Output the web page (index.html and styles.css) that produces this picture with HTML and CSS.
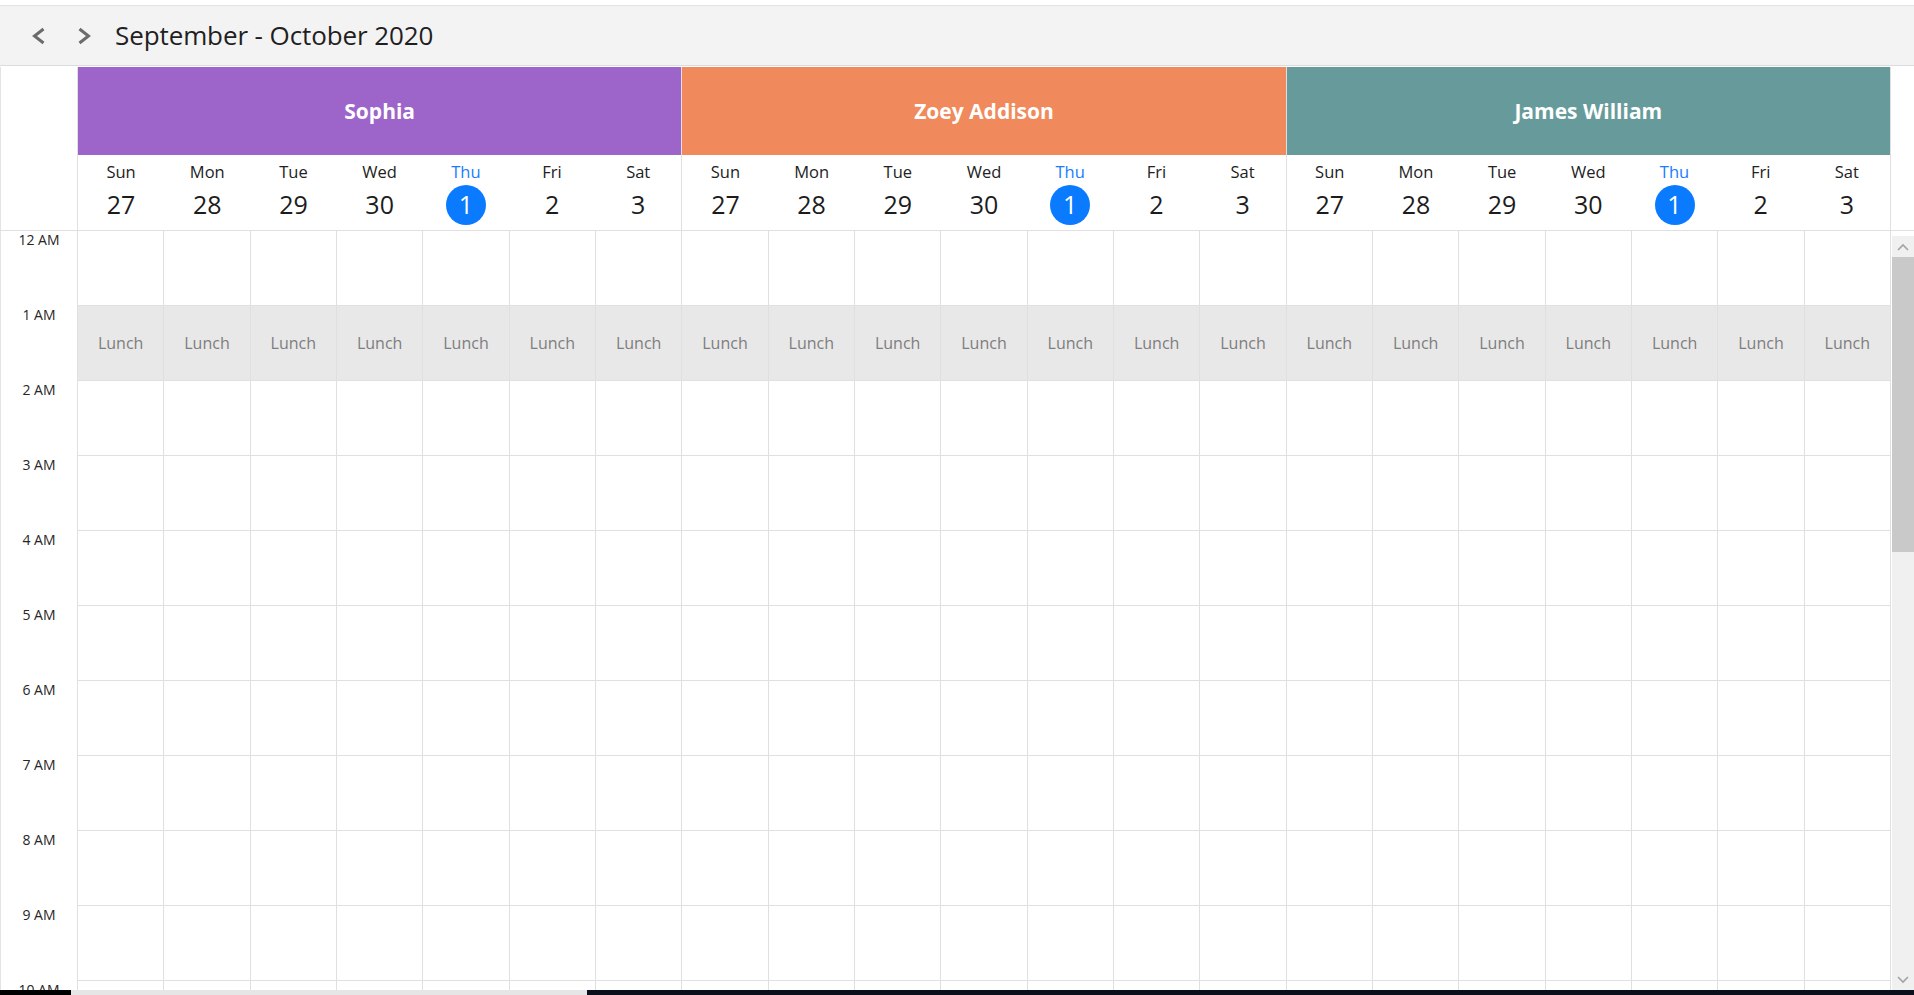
FILE: index.html
```html
<!DOCTYPE html>
<html lang="en">
<head>
<meta charset="utf-8">
<title>Scheduler</title>
<link rel="stylesheet" href="styles.css">
</head>
<body>
<div class="page">
  <header class="toolbar">
    <button class="nav-btn" aria-label="Previous">
      <svg width="14" height="18" viewBox="0 0 14 18"><polyline points="11.5,2 2.5,9 11.5,16" /></svg>
    </button>
    <button class="nav-btn" aria-label="Next">
      <svg width="14" height="18" viewBox="0 0 14 18"><polyline points="2.5,2 11.5,9 2.5,16" /></svg>
    </button>
    <h1 class="title">September - October 2020</h1>
  </header>

  <section class="scheduler">
    <div class="head-row">
      <div class="corner"></div>
      <div class="resources">
        <div class="resource">
          <div class="res-name purple">Sophia</div>
          <div class="days">
            <div class="day"><span class="dname">Sun</span><span class="dnum">27</span></div>
            <div class="day"><span class="dname">Mon</span><span class="dnum">28</span></div>
            <div class="day"><span class="dname">Tue</span><span class="dnum">29</span></div>
            <div class="day"><span class="dname">Wed</span><span class="dnum">30</span></div>
            <div class="day today"><span class="dname">Thu</span><span class="dnum">1</span></div>
            <div class="day"><span class="dname">Fri</span><span class="dnum">2</span></div>
            <div class="day"><span class="dname">Sat</span><span class="dnum">3</span></div>
          </div>
        </div>
        <div class="resource">
          <div class="res-name orange">Zoey Addison</div>
          <div class="days">
            <div class="day"><span class="dname">Sun</span><span class="dnum">27</span></div>
            <div class="day"><span class="dname">Mon</span><span class="dnum">28</span></div>
            <div class="day"><span class="dname">Tue</span><span class="dnum">29</span></div>
            <div class="day"><span class="dname">Wed</span><span class="dnum">30</span></div>
            <div class="day today"><span class="dname">Thu</span><span class="dnum">1</span></div>
            <div class="day"><span class="dname">Fri</span><span class="dnum">2</span></div>
            <div class="day"><span class="dname">Sat</span><span class="dnum">3</span></div>
          </div>
        </div>
        <div class="resource">
          <div class="res-name teal">James William</div>
          <div class="days">
            <div class="day"><span class="dname">Sun</span><span class="dnum">27</span></div>
            <div class="day"><span class="dname">Mon</span><span class="dnum">28</span></div>
            <div class="day"><span class="dname">Tue</span><span class="dnum">29</span></div>
            <div class="day"><span class="dname">Wed</span><span class="dnum">30</span></div>
            <div class="day today"><span class="dname">Thu</span><span class="dnum">1</span></div>
            <div class="day"><span class="dname">Fri</span><span class="dnum">2</span></div>
            <div class="day"><span class="dname">Sat</span><span class="dnum">3</span></div>
          </div>
        </div>
      </div>
      <div class="head-spacer"></div>
    </div>

    <div class="body-row">
      <div class="times">
        <div class="time">12 AM</div>
        <div class="time">1 AM</div>
        <div class="time">2 AM</div>
        <div class="time">3 AM</div>
        <div class="time">4 AM</div>
        <div class="time">5 AM</div>
        <div class="time">6 AM</div>
        <div class="time">7 AM</div>
        <div class="time">8 AM</div>
        <div class="time">9 AM</div>
        <div class="time">10 AM</div>
      </div>
      <div class="grid">
        <div class="row"><i></i><i></i><i></i><i></i><i></i><i></i><i></i><i></i><i></i><i></i><i></i><i></i><i></i><i></i><i></i><i></i><i></i><i></i><i></i><i></i><i></i></div>
        <div class="row lunch"><i>Lunch</i><i>Lunch</i><i>Lunch</i><i>Lunch</i><i>Lunch</i><i>Lunch</i><i>Lunch</i><i>Lunch</i><i>Lunch</i><i>Lunch</i><i>Lunch</i><i>Lunch</i><i>Lunch</i><i>Lunch</i><i>Lunch</i><i>Lunch</i><i>Lunch</i><i>Lunch</i><i>Lunch</i><i>Lunch</i><i>Lunch</i></div>
        <div class="row"><i></i><i></i><i></i><i></i><i></i><i></i><i></i><i></i><i></i><i></i><i></i><i></i><i></i><i></i><i></i><i></i><i></i><i></i><i></i><i></i><i></i></div>
        <div class="row"><i></i><i></i><i></i><i></i><i></i><i></i><i></i><i></i><i></i><i></i><i></i><i></i><i></i><i></i><i></i><i></i><i></i><i></i><i></i><i></i><i></i></div>
        <div class="row"><i></i><i></i><i></i><i></i><i></i><i></i><i></i><i></i><i></i><i></i><i></i><i></i><i></i><i></i><i></i><i></i><i></i><i></i><i></i><i></i><i></i></div>
        <div class="row"><i></i><i></i><i></i><i></i><i></i><i></i><i></i><i></i><i></i><i></i><i></i><i></i><i></i><i></i><i></i><i></i><i></i><i></i><i></i><i></i><i></i></div>
        <div class="row"><i></i><i></i><i></i><i></i><i></i><i></i><i></i><i></i><i></i><i></i><i></i><i></i><i></i><i></i><i></i><i></i><i></i><i></i><i></i><i></i><i></i></div>
        <div class="row"><i></i><i></i><i></i><i></i><i></i><i></i><i></i><i></i><i></i><i></i><i></i><i></i><i></i><i></i><i></i><i></i><i></i><i></i><i></i><i></i><i></i></div>
        <div class="row"><i></i><i></i><i></i><i></i><i></i><i></i><i></i><i></i><i></i><i></i><i></i><i></i><i></i><i></i><i></i><i></i><i></i><i></i><i></i><i></i><i></i></div>
        <div class="row"><i></i><i></i><i></i><i></i><i></i><i></i><i></i><i></i><i></i><i></i><i></i><i></i><i></i><i></i><i></i><i></i><i></i><i></i><i></i><i></i><i></i></div>
        <div class="row"><i></i><i></i><i></i><i></i><i></i><i></i><i></i><i></i><i></i><i></i><i></i><i></i><i></i><i></i><i></i><i></i><i></i><i></i><i></i><i></i><i></i></div>
      </div>
      <div class="vscroll">
        <div class="sb-btn">
          <svg width="12" height="8" viewBox="0 0 12 8"><polyline points="1,7 6,2 11,7" /></svg>
        </div>
        <div class="sb-thumb"></div>
        <div class="sb-track"></div>
        <div class="sb-btn">
          <svg width="12" height="8" viewBox="0 0 12 8"><polyline points="1,1 6,6 11,1" /></svg>
        </div>
      </div>
    </div>
  </section>

  <div class="taskbar">
    <span class="tb-a"></span>
    <span class="tb-b"></span>
    <span class="tb-c"></span>
  </div>
</div>
</body>
</html>
```

FILE: styles.css
```css
* {
  box-sizing: border-box;
}

html,
body {
  margin: 0;
  padding: 0;
  width: 1914px;
  height: 995px;
  overflow: hidden;
  background: #ffffff;
  font-family: "Open Sans", "Noto Sans", "Liberation Sans", sans-serif;
  color: #1e1e1e;
}

.page {
  display: flex;
  flex-direction: column;
  height: 995px;
  padding-top: 5px;
}

/* ---------- toolbar ---------- */
.toolbar {
  height: 61px;
  flex: none;
  display: flex;
  align-items: center;
  background: #f3f3f3;
  border-top: 1px solid #e2e2e2;
  border-bottom: 1px solid #dcdcdc;
  padding-left: 31px;
}

.nav-btn {
  width: 16px;
  height: 20px;
  padding: 0;
  border: 0;
  background: transparent;
  display: flex;
  align-items: center;
  justify-content: center;
  margin-right: 29px;
}

.nav-btn + .nav-btn {
  margin-right: 23px;
}

.nav-btn svg polyline {
  fill: none;
  stroke: #6b6b6b;
  stroke-width: 3;
  stroke-linecap: butt;
  stroke-linejoin: miter;
}

.title {
  margin: 0 0 2px 0;
  font-size: 26px;
  font-weight: 400;
  color: #1f1f1f;
  letter-spacing: -0.1px;
}

/* ---------- scheduler ---------- */
.scheduler {
  flex: 1;
  display: flex;
  flex-direction: column;
  padding-top: 1px;
  min-height: 0;
}

.head-row {
  display: flex;
  flex: none;
  height: 164px;
  border-bottom: 1px solid #e0e0e0;
}

.corner {
  width: 78px;
  flex: none;
  border-left: 1px solid #e3e3e3;
  border-right: 1px solid #e0e0e0;
}

.resources {
  flex: 1;
  display: flex;
}

.resource {
  flex: 1;
  display: flex;
  flex-direction: column;
  border-right: 1px solid #e0e0e0;
}

.res-name {
  height: 88px;
  display: flex;
  align-items: center;
  justify-content: center;
  color: #ffffff;
  font-weight: 700;
  font-size: 21px;
}

.purple { background: #9d65c9; }
.orange { background: #f08a5d; }
.teal { background: #679b9b; }

.days {
  flex: 1;
  display: flex;
}

.day {
  flex: 1;
  display: flex;
  flex-direction: column;
  align-items: center;
  padding-top: 6px;
}

.dname {
  font-size: 16.5px;
  line-height: 22px;
  color: #222222;
}

.dnum {
  margin-top: 2px;
  width: 40px;
  height: 40px;
  line-height: 38px;
  text-align: center;
  font-size: 25px;
  color: #1c1c1c;
  border-radius: 50%;
}

.today .dname {
  color: #1a7dff;
}

.today .dnum {
  background: #0a7bff;
  color: #ffffff;
}

.head-spacer {
  width: 23px;
  flex: none;
}

/* ---------- body ---------- */
.body-row {
  flex: 1;
  display: flex;
  min-height: 0;
  overflow: hidden;
}

.times {
  width: 78px;
  flex: none;
  border-left: 1px solid #e3e3e3;
  border-right: 1px solid #e0e0e0;
}

.time {
  height: 75px;
  text-align: center;
  font-size: 14px;
  line-height: 18px;
  padding-top: 0;
  color: #262626;
}

.grid {
  flex: 1;
  display: flex;
  flex-direction: column;
}

.row {
  flex: none;
  height: 75px;
  display: grid;
  grid-template-columns: repeat(21, 1fr);
}

.row i {
  font-style: normal;
  border-right: 1px solid #e0e0e0;
  border-bottom: 1px solid #e0e0e0;
}

.lunch i {
  background: #e8e8e8;
  display: flex;
  align-items: center;
  justify-content: center;
  font-size: 16px;
  color: #7e7e7e;
}

/* vertical scrollbar */
.vscroll {
  width: 22px;
  margin-left: 1px;
  flex: none;
  margin-top: 5px;
  background: #f0f0f0;
  display: flex;
  flex-direction: column;
}

.sb-btn {
  height: 21px;
  flex: none;
  display: flex;
  align-items: center;
  justify-content: center;
}

.sb-btn svg polyline {
  fill: none;
  stroke: #a3a3a3;
  stroke-width: 1.6;
}

.sb-thumb {
  height: 295px;
  flex: none;
  background: #c9c9c9;
}

.sb-track {
  flex: 1;
}

/* bottom strip */
.taskbar {
  height: 5px;
  flex: none;
  display: flex;
}

.tb-a {
  width: 71px;
  background: #000000;
}

.tb-b {
  width: 516px;
  background: #e6e6e6;
}

.tb-c {
  flex: 1;
  background: #0b0f1b;
}
```
